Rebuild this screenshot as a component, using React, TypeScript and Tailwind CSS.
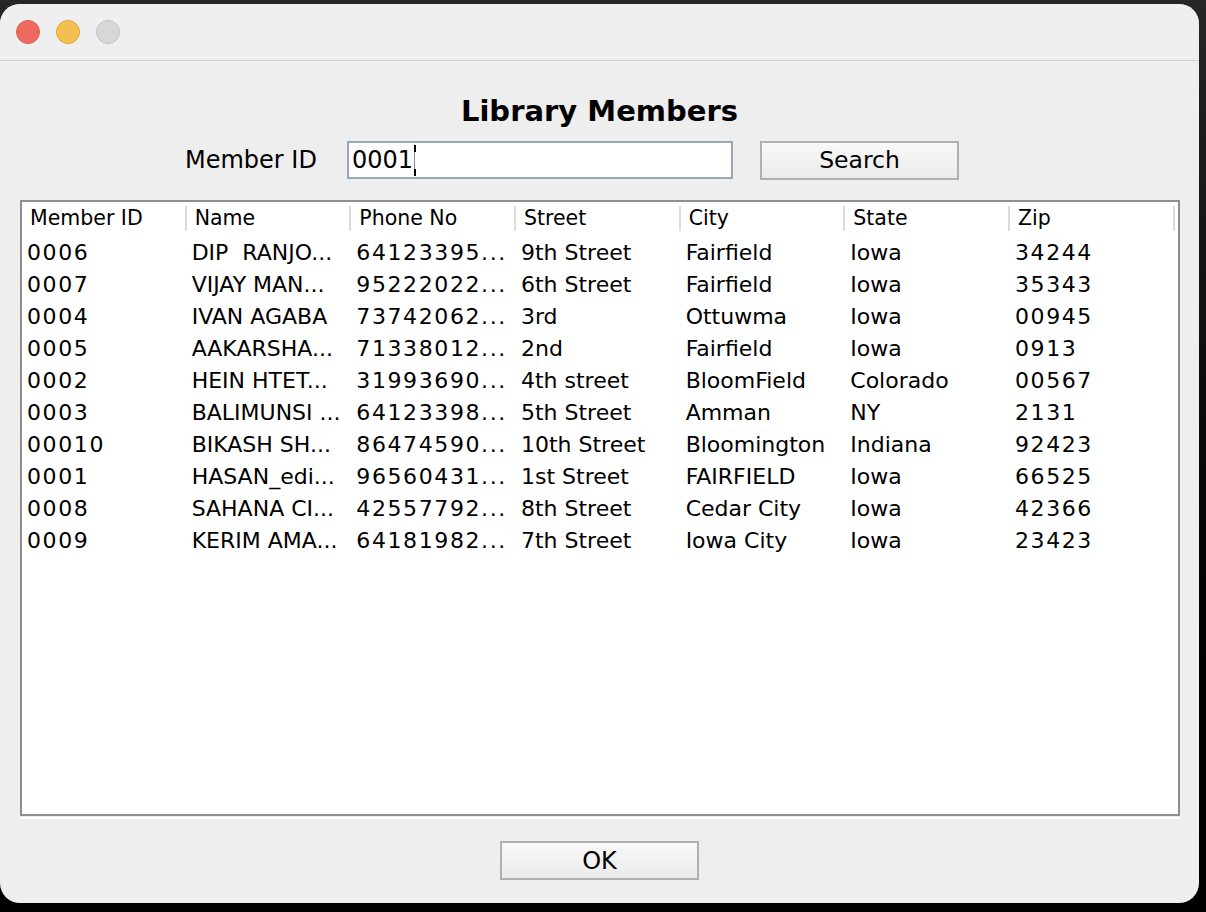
const columns = ['Member ID', 'Name', 'Phone No', 'Street', 'City', 'State', 'Zip'];

const cellClass = [
  'tracking-[1.6px]',
  '',
  'tracking-[1.6px]',
  '',
  '',
  '',
  'tracking-[1.6px]',
];

const members: string[][] = [
  ['0006', 'DIP  RANJO...', '64123395...', '9th Street', 'Fairfield', 'Iowa', '34244'],
  ['0007', 'VIJAY MAN...', '95222022...', '6th Street', 'Fairfield', 'Iowa', '35343'],
  ['0004', 'IVAN AGABA', '73742062...', '3rd', 'Ottuwma', 'Iowa', '00945'],
  ['0005', 'AAKARSHA...', '71338012...', '2nd', 'Fairfield', 'Iowa', '0913'],
  ['0002', 'HEIN HTET...', '31993690...', '4th street', 'BloomField', 'Colorado', '00567'],
  ['0003', 'BALIMUNSI ...', '64123398...', '5th Street', 'Amman', 'NY', '2131'],
  ['00010', 'BIKASH SH...', '86474590...', '10th Street', 'Bloomington', 'Indiana', '92423'],
  ['0001', 'HASAN_edi...', '96560431...', '1st Street', 'FAIRFIELD', 'Iowa', '66525'],
  ['0008', 'SAHANA CI...', '42557792...', '8th Street', 'Cedar City', 'Iowa', '42366'],
  ['0009', 'KERIM AMA...', '64181982...', '7th Street', 'Iowa City', 'Iowa', '23423'],
];

function TitleBar() {
  return (
    <div className="h-[57px] shrink-0 bg-[#efefef] border-b border-[#d0d0d0] flex items-center pl-[16px] gap-[16px]">
      <div className="w-[24px] h-[24px] rounded-full bg-[#ee6a5f] border border-[#d85a4f]" />
      <div className="w-[24px] h-[24px] rounded-full bg-[#f5bf4f] border border-[#dba43e]" />
      <div className="w-[24px] h-[24px] rounded-full bg-[#d7d7d7] border border-[#c4c4c4]" />
    </div>
  );
}

function MemberTable() {
  return (
    <div className="ml-[20px] w-[1160px] h-[616px] border-2 border-[#8e8e8e] bg-white overflow-hidden">
      <div className="grid grid-cols-[repeat(7,164.67px)] h-[32px]">
        {columns.map((c) => (
          <div key={c} className="flex items-center justify-between">
            <span className="pl-[8px] text-[20.5px] text-black whitespace-nowrap">{c}</span>
            <div className="w-[2px] h-[25px] bg-[#dcdcdc]" />
          </div>
        ))}
      </div>
      <div className="mt-[2px]">
        {members.map((row) => (
          <div key={row[0]} className="grid grid-cols-[repeat(7,164.67px)] h-[32px]">
            {row.map((cell, i) => (
              <div
                key={i}
                className={`flex items-center pl-[5px] text-[22px] text-black whitespace-pre overflow-hidden ${cellClass[i]}`}
              >
                {cell}
              </div>
            ))}
          </div>
        ))}
      </div>
    </div>
  );
}

export default function App() {
  return (
    <div className="w-[1206px] h-[912px] bg-linear-to-b from-[#262626] to-black pt-[4px] font-['DejaVu_Sans',sans-serif]">
      <div className="w-[1199px] h-[899px] rounded-[20px] overflow-hidden bg-[#eeeeee] flex flex-col">
        <TitleBar />
        <div className="flex flex-col">
          <div className="mt-[33px] h-[36px] flex items-center justify-center text-[29px] font-bold text-black">
            Library Members
          </div>
          <div className="mt-[10px] h-[40px] flex items-center pl-[185px]">
            <div className="w-[162px] text-[24px] text-black">Member ID</div>
            <div className="w-[386px] h-[38px] border-2 border-[#9aa7bb] bg-white flex items-center pl-[3px]">
              <span className="text-[24px] text-black">0001</span>
              <div className="flex flex-col w-[2px] h-[31px] ml-[1px]">
                <div className="h-[7px] bg-black" />
                <div className="flex-1 bg-[#8a8a8a] w-[1px]" />
                <div className="h-[7px] bg-black" />
              </div>
            </div>
            <button className="ml-[27px] w-[199px] h-[39px] border-2 border-[#b0b0b0] bg-linear-to-b from-[#f8f8f8] to-[#ebebeb] text-[23.5px] text-black">
              Search
            </button>
          </div>
          <div className="mt-[20px]">
            <MemberTable />
          </div>
          <div className="ml-[20px] mt-[1px] w-[1160px] h-[2px] bg-white" />
          <div className="mt-[22px] flex justify-center">
            <button className="w-[199px] h-[39px] border-2 border-[#b0b0b0] bg-linear-to-b from-[#f8f8f8] to-[#ebebeb] text-[24px] text-black">
              OK
            </button>
          </div>
        </div>
      </div>
    </div>
  );
}
